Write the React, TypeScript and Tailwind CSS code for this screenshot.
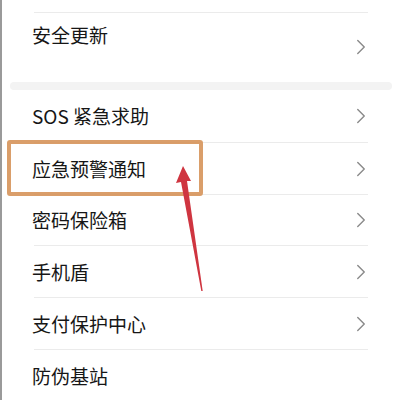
import { ChevronRight } from 'lucide-react';

const rows = [
  { label: 'SOS 紧急求助', h: 'h-[52px]', arrow: true },
  { label: '应急预警通知', h: 'h-[51px]', arrow: true },
  { label: '密码保险箱', h: 'h-[50px]', arrow: true },
  { label: '手机盾', h: 'h-[51px]', arrow: true },
  { label: '支付保护中心', h: 'h-[51px]', arrow: true },
  { label: '防伪基站', h: 'h-[51px]', arrow: false },
];

function Divider() {
  return <div className="mx-8 h-px bg-[#ebebeb]" />;
}

function Chevron() {
  return <ChevronRight size={26} strokeWidth={1.3} className="text-[#8a8a8a]" />;
}

export default function App() {
  return (
    <div
      className="relative h-[400px] w-[400px] overflow-hidden border-l-2 border-[#9a9a9a] bg-white text-[#161616]"
      style={{ fontFamily: '"Noto Sans CJK SC", "Noto Sans", sans-serif' }}
    >
      <div className="h-3" />
      <Divider />
      {/* 上の項目 */}
      <div className="flex h-[69px] items-start justify-between pl-[30px] pr-[26px]">
        <span className="pt-[8px] text-[19px] leading-[28px]">安全更新</span>
        <span className="pt-[21px]">
          <Chevron />
        </span>
      </div>
      <div className="mx-2 h-2 rounded-full bg-[#f3f3f3]" />

      {rows.map((r, i) => (
        <div key={r.label}>
          {i > 0 && <Divider />}
          <div className={`flex ${r.h} items-center justify-between pl-[30px] pr-[26px]`}>
            <span className="text-[19px] leading-[28px]">{r.label}</span>
            {r.arrow && <Chevron />}
          </div>
        </div>
      ))}

      {/* 注釈：枠と矢印 */}
      <div className="absolute left-[5px] top-[140px] h-[56px] w-[196px] rounded-[3px] border-4 border-[#d6935a]/90" />
      <svg className="absolute left-0 top-0" width="400" height="400" viewBox="0 0 400 400">
        <polygon points="181,166 174,183 179,182 199.3,291 200.7,291 185,181 189,181" fill="#cf3540" />
      </svg>
    </div>
  );
}
